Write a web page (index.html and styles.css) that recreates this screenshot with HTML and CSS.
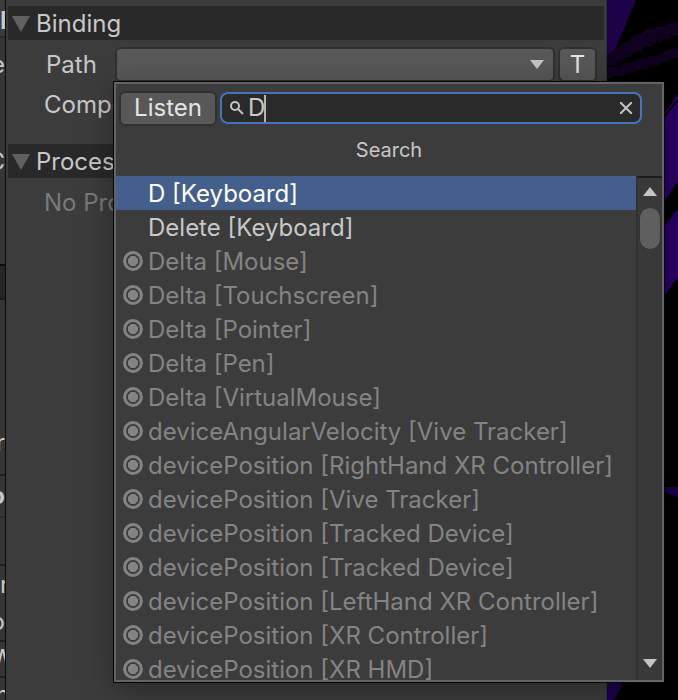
FILE: index.html
```html
<!DOCTYPE html>
<html lang="en">
<head>
<meta charset="utf-8">
<title>Binding</title>
<link rel="stylesheet" href="styles.css">
</head>
<body>
<div class="editor">
  <aside class="actions">
    <div class="cell cell-head start"><b>P</b></div>
    <div class="cell cell-e">e</div>
    <div class="cell cell-c">C</div>
    <div class="cell cell-gap"></div>
    <div class="cell cell-dark"></div>
    <div class="cell cell-er"><span>er</span></div>
    <div class="cell cell-o"><b>o</b></div>
    <div class="cell cell-blank"></div>
    <div class="cell cell-n start">r</div>
    <div class="cell cell-p">o</div>
    <div class="cell cell-w middle">W</div>
    <div class="cell cell-last middle">n</div>
  </aside>
  <main class="inspector">
    <h2 class="section"><svg class="fold" viewBox="0 0 18 16"><path d="M0 0h18L9 16z"/></svg>Binding</h2>
    <div class="field">
      <label class="path-label" for="path">Path</label>
      <button class="button path" id="path" type="button" aria-label="Path"><svg class="arrow" viewBox="0 0 14 9"><path d="M0 0h14L7 9z"/></svg></button>
      <button class="button toggle" type="button">T</button>
    </div>
    <p class="line">Composite</p>
    <h2 class="section"><svg class="fold" viewBox="0 0 18 16"><path d="M0 0h18L9 16z"/></svg>Processors</h2>
    <p class="line muted">No Processors</p>
  </main>
  <div class="scene">
    <svg viewBox="0 0 71 700" preserveAspectRatio="xMinYMin slice">
      <path fill="#1d0149" d="M0 0h29L6 55H0z"/>
      <path fill="#10021f" d="M0 56q5-8 12-7 3-8 10-7 3-9 12-8 4-7 13-5 4-4 10-3 5-4 15-3v12q-8 0-10 4-6-1-9 4-7-1-10 4-6-1-9 5-8-1-11 5-5-1-8 5-6-1-8 4-6-2-12 1z"/>
      <path fill="#10021f" d="M0 68q6-3 12 0 5-7 13-5 5-6 13-4 6-5 13-3 7-7 21-8v10q-9 0-11 4-7-1-10 4-8-2-12 3-8-2-12 4-8-2-12 3-8-2-15 4z"/>
      <path fill="#2a0068" d="M57 114L71 94v87L57 202zM57 227L71 209v68L57 296z"/>
      <path stroke="#050009" stroke-width="2" d="M57 117L71 100"/>
      <path fill="#1d0149" d="M57 487h14v10l-14-5zM0 682h17L7 700H0z"/>
    </svg>
  </div>
  <section class="popup" aria-label="Path picker">
    <div class="toolbar">
      <button class="button listen" type="button">Listen</button>
      <div class="search">
        <svg class="lens" viewBox="0 0 14 14"><circle cx="5" cy="5" r="4"/><path d="M8 8l5 5"/></svg>
        <input type="text" value="D" aria-label="Search controls">
        <i class="caret"></i>
        <button class="clear" type="button" aria-label="Clear"><svg viewBox="0 0 12 12"><path d="M0 0l12 12M12 0L0 12"/></svg></button>
      </div>
    </div>
    <h3 class="title">Search</h3>
    <div class="results">
      <ul class="list">
        <li class="item selected">D [Keyboard]</li>
        <li class="item">Delete [Keyboard]</li>
        <li class="item off">Delta [Mouse]</li>
        <li class="item off">Delta [Touchscreen]</li>
        <li class="item off">Delta [Pointer]</li>
        <li class="item off">Delta [Pen]</li>
        <li class="item off">Delta [VirtualMouse]</li>
        <li class="item off">deviceAngularVelocity [Vive Tracker]</li>
        <li class="item off">devicePosition [RightHand XR Controller]</li>
        <li class="item off">devicePosition [Vive Tracker]</li>
        <li class="item off">devicePosition [Tracked Device]</li>
        <li class="item off">devicePosition [Tracked Device]</li>
        <li class="item off">devicePosition [LeftHand XR Controller]</li>
        <li class="item off">devicePosition [XR Controller]</li>
        <li class="item off">devicePosition [XR HMD]</li>
      </ul>
      <div class="scrollbar">
        <svg class="arrow" viewBox="0 0 14 9"><path d="M0 9h14L7 0z"/></svg>
        <div class="thumb"></div>
        <svg class="arrow end" viewBox="0 0 14 9"><path d="M0 0h14L7 9z"/></svg>
      </div>
    </div>
  </section>
</div>
<script src="icons.js"></script>
</body>
</html>
```
FILE: icons.js
```js
const icon = '<svg class="ring" viewBox="0 0 20 20" aria-hidden="true"><circle cx="10" cy="10" r="8.4"/><path d="M8 5h4l3 3v4l-3 3H8l-3-3V8z"/></svg>';
document.querySelectorAll('.item.off').forEach(item => item.insertAdjacentHTML('afterbegin', icon));
```
FILE: styles.css
```css
* { box-sizing: border-box; }
body {
  margin: 0;
  background: #000;
  color: #c8c8c8;
  font: 24px/34px Inter, sans-serif;
}
h2, h3, p, ul { margin: 0; padding: 0; font-weight: 400; font-size: inherit; }
svg { display: block; flex: none; }
button, input { font: inherit; color: inherit; padding: 0; margin: 0; }
.editor {
  position: relative;
  display: grid;
  grid-template-columns: 6px minmax(0, 1fr) 71px;
  height: 100vh;
  min-height: 400px;
  overflow: hidden;
}
.actions {
  display: flex;
  flex-direction: column;
  overflow: hidden;
  background: #363636;
  border-right: 1px solid #090909;
}
.cell {
  display: flex;
  flex: none;
  justify-content: flex-end;
  align-items: center;
  overflow: hidden;
  border-bottom: 2px solid #1c1c1c;
}
.start { justify-content: flex-start; }
.middle { justify-content: center; }
.cell-head { height: 38px; padding-top: 6px; background: #3c3c3c; border-color: #282828; }
.cell-e { height: 54px; border: 0; }
.cell-c { height: 140px; border: 0; }
.cell-gap { height: 34px; border-color: #0c0c0c; }
.cell-dark { height: 34px; background: #262626; }
.cell-er { height: 176px; align-items: flex-end; padding-bottom: 14px; }
.cell-o { height: 42px; border-color: #2b2b2b; }
.cell-blank { height: 48px; }
.cell-n { height: 38px; border: 0; }
.cell-p { height: 38px; }
.cell-w { height: 36px; }
.cell-last { height: 34px; border: 0; }
.inspector {
  background: #3c3c3c;
  padding: 6px 2px 0;
  border-right: 1px solid #303030;
}
.section {
  display: flex;
  align-items: center;
  gap: 6px;
  height: 34px;
  padding: 2px 0 0 4px;
  background: #292929;
}
.fold { width: 18px; height: 16px; fill: #606060; }
.field {
  display: flex;
  align-items: center;
  gap: 3px;
  padding: 7px 7px 6px 38px;
}
.path-label { width: 66px; }
.button {
  height: 35px;
  border: 2px solid #303030;
  border-radius: 6px;
  background: #585858;
  color: #e4e4e4;
  line-height: 30px;
}
.path {
  display: flex;
  flex: 1;
  align-items: center;
  justify-content: flex-end;
  padding-right: 9px;
}
.toggle { width: 39px; }
.arrow { width: 14px; height: 9px; fill: #c4c4c4; }
.line { padding: 0 0 0 36px; height: 56px; }
.line.muted { padding-top: 8px; color: #7a7a7a; }
.scene { overflow: hidden; }
.scene svg { width: 100%; height: 100%; }
.popup {
  position: absolute;
  top: 82px;
  right: 14px;
  bottom: 18px;
  left: 114px;
  display: flex;
  flex-direction: column;
  background: #3c3c3c;
  border: 2px solid #646464;
  box-shadow: 0 0 0 1px #060606, 0 6px 30px rgba(0, 0, 0, 0.35);
}
.toolbar {
  display: flex;
  gap: 3px;
  padding: 7px 20px 0 3px;
}
.listen { width: 98px; padding-bottom: 2px; }
.search {
  display: flex;
  flex: 1;
  align-items: center;
  height: 32px;
  margin-top: 1px;
  padding: 0 8px;
  border: 2px solid #4676b8;
  border-radius: 8px;
  background: #2a2a2a;
}
.lens { width: 14px; height: 14px; fill: none; stroke: #c4c4c4; stroke-width: 2; }
.search input {
  width: 16px;
  height: 28px;
  margin-left: 4px;
  border: 0;
  outline: 0;
  background: none;
}
.caret { width: 2px; height: 27px; background: #b4b4b4; }
.clear { margin-left: auto; border: 0; background: none; }
.clear svg { width: 12px; height: 12px; stroke: #c4c4c4; stroke-width: 2; }
.title {
  height: 50px;
  padding-top: 7px;
  font-size: 20px;
  text-align: center;
}
.results { display: flex; flex: 1; min-height: 0; }
.list { flex: 1; overflow: hidden; list-style: none; }
.item {
  display: flex;
  align-items: center;
  height: 34px;
  padding: 2px 0 0 32px;
  white-space: nowrap;
}
.selected { background: #455f8c; color: #fff; }
.off { gap: 5px; padding-left: 7px; color: #848484; }
.ring { width: 20px; height: 20px; margin-bottom: 2px; fill: none; stroke: #848484; stroke-width: 3; }
.ring path { fill: #848484; stroke: none; }
.scrollbar {
  display: flex;
  flex-direction: column;
  align-items: center;
  width: 26px;
  padding: 9px 0 12px;
  background: #393939;
  border-top: 2px solid #1c1c1c;
  border-left: 2px solid #323232;
}
.thumb {
  width: 22px;
  height: 43px;
  margin-top: 11px;
  border: 1px solid #333;
  border-radius: 11px;
  background: #5f5f5f;
}
.end { margin-top: auto; }
```
